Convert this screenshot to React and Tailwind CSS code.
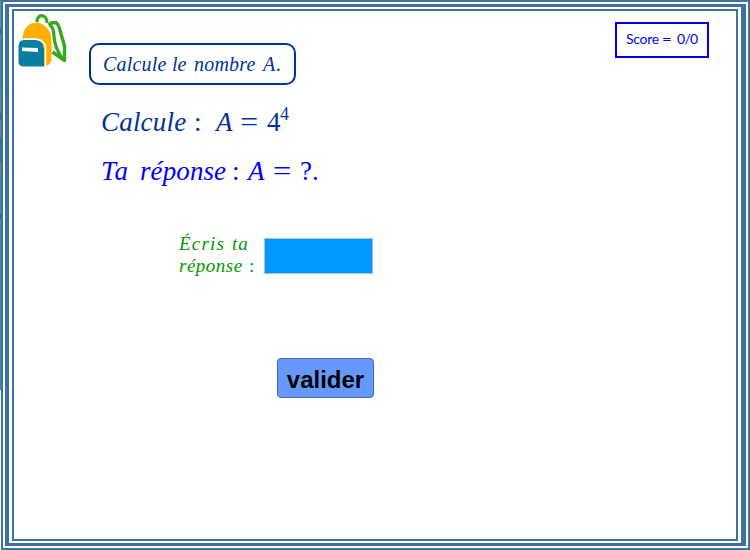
import React from "react";

function Word({ w, className, children }) {
  return <span className={"inline-block whitespace-nowrap " + w + " " + (className || "")}>{children}</span>;
}

function Backpack() {
  return (
    <svg className="block h-[60px] w-[54px]" viewBox="14 11 54 60">
      <path d="M37 22 C36.5 13.5 47 13 47 23" fill="none" stroke="#35a820" strokeWidth="3.2" />
      <path d="M48.5 25 L51 23 L56 22.5 Q58 24 59 27 L64.5 46 L64.5 60.5 L52.5 52" fill="none" stroke="#35a820" strokeWidth="3.4" strokeLinejoin="round" />
      <path d="M49.5 25 Q54 27 54 37 Q55 48 62 58" fill="none" stroke="#35a820" strokeWidth="3.2" />
      <path d="M22.5 39 C23 28 29 22.5 37 22.5 C47 24 51.5 32 51.5 41 L51.5 60 Q50 66 44 66 L44 47 Q43 41 37 39 Z" fill="#ffb000" />
      <path d="M24 39 L36 39 Q45 40 45.5 48 L45.5 67" fill="none" stroke="#fff" strokeWidth="1.5" />
      <path d="M18.5 46 Q19 40 24 40 L36 40 Q44 41 44 49 L44 66.5 L23 66.5 Q18.5 66 18.5 62 Z" fill="#087fa0" />
      <path d="M22 47.5 L38 48 L38 52 L22 51 Z" fill="#fff" />
    </svg>
  );
}

export default function App() {
  return (
    <div className="relative h-[550px] w-[750px] overflow-hidden bg-white">
      <div className="absolute left-0 top-0 h-[390px] w-px bg-[linear-gradient(#3ba2b4_0_28px,#13798c_28px_34px,#3399aa_34px_90px,#4c957f_90px_113px,#13798c_113px_120px,#4c957f_120px_138px,#247b92_138px_162px,#4c957f_162px_175px,#3399aa_175px_214px,#087494_214px_219px,#3399aa_219px_390px)]" />
      <div className="ml-px h-full border-2 border-[#3f719f] pb-0.5 pl-0.5 pr-0.5 pt-0.5">
        <div className="h-full border-b-[3px] border-l-4 border-r-[5px] border-t-[3px] border-[#3f719f] pb-0.5 pl-[3px] pr-[3px] pt-0.5">
          <main className="flex h-full flex-col border-2 border-[#3f719f] font-['Liberation_Serif',serif]">
            <header className="flex h-[75px] items-start">
              <Backpack />
              <h1 className="ml-[21px] mt-8 flex h-[42px] w-[207px] shrink-0 items-center rounded-[10px] border-2 border-[#003399] pl-3 text-[20px] italic text-[#003399]">
                <Word w="w-[69px]" className="tracking-[0.2px]">Calcule</Word><Word w="w-[22px]">le</Word><Word w="w-[69px]" className="tracking-[0.2px]">nombre</Word><Word w="w-[22px]" className="tracking-[1px]">A.</Word>
              </h1>
              <div className="ml-[319px] mt-[11px] flex h-9 w-[94px] shrink-0 items-center border-2 border-[#0000ff] pb-[3px] pl-[9px] font-['Lato',sans-serif] text-[14px] text-[#0000ff]">
                <Word w="w-[36px]" className="tracking-[-0.3px]">Score</Word><Word w="w-[15px]" className="origin-left scale-x-120">=</Word><Word w="w-[22px]" className="tracking-[-0.7px]">0/0</Word>
              </div>
            </header>
            <p className="ml-[87px] mt-[20px] flex h-8 items-center text-[27px] italic text-[#003399]">
              <Word w="w-[93px]" className="tracking-[0.2px]">Calcule</Word><Word w="w-[22px]" className="not-italic">:</Word><Word w="w-[24px]">A</Word><Word w="w-[27px]" className="origin-left scale-x-120 not-italic">=</Word><Word w="w-[13px]" className="not-italic">4</Word><sup className="-top-2 text-[18px] not-italic">4</sup>
            </p>
            <p className="ml-[87px] mt-[17px] flex h-8 items-center text-[27px] italic text-[#0000ff]">
              <Word w="w-[39px]" className="tracking-[1px]">Ta</Word><Word w="w-[92px]" className="tracking-[0.1px]">réponse</Word><Word w="w-[16px]" className="not-italic">:</Word><Word w="w-[25px]">A</Word><Word w="w-[27px]" className="origin-left scale-x-120 not-italic">=</Word><Word w="w-[20px]" className="not-italic">?.</Word>
            </p>
            <div className="ml-[165px] mt-[44px] flex h-[48px] items-center">
              <label className="w-[85px] shrink-0 text-[19px] italic leading-[22px] text-[#009900]">
                <Word w="w-[53px]" className="tracking-[1.2px]">Écris</Word><Word w="w-[24px]" className="tracking-[1px]">ta</Word><br />
                <Word w="w-[70px]" className="tracking-[0.5px]">réponse</Word><Word w="w-[8px]" className="not-italic">:</Word>
              </label>
              <input aria-label="réponse" className="mt-0.5 h-9 w-[109px] border border-[#b5bdc5] bg-[#0099ff] outline-none" />
            </div>
            <button className="ml-[263px] mt-[79px] h-10 w-[97px] rounded-[4px] border border-[#416bc0] bg-[#6699ff] pt-1 font-['Liberation_Sans',sans-serif] text-[24px] font-bold leading-none text-black">valider</button>
          </main>
        </div>
      </div>
    </div>
  );
}
